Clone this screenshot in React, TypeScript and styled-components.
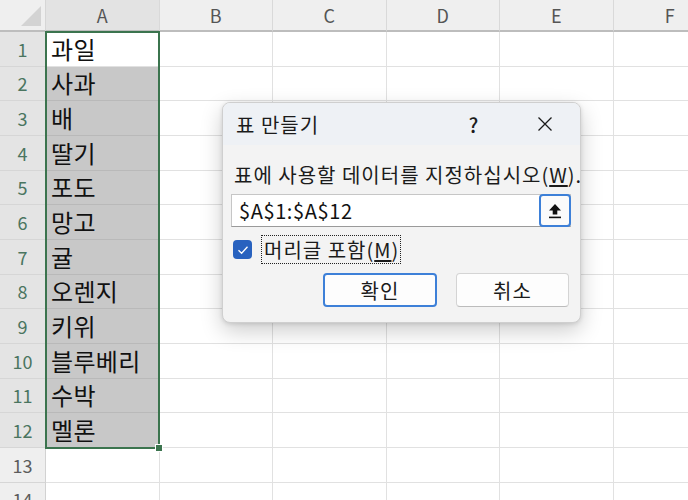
import React from 'react';
import styled, { createGlobalStyle } from 'styled-components';

const GlobalStyle = createGlobalStyle`
  html, body {
    margin: 0;
    padding: 0;
    background: #ffffff;
  }
  body {
    font-family: "Noto Sans CJK KR", "Noto Sans", sans-serif;
    color: #1a1a1a;
  }
`;

const COL_W = 113.5;
const ROW_H = 34.67;

const Page = styled.div`
  position: relative;
  width: 688px;
  height: 500px;
  overflow: hidden;
`;

const Sheet = styled.div`
  display: grid;
  grid-template-columns: 46px repeat(6, ${COL_W}px);
  grid-template-rows: 32px repeat(14, ${ROW_H}px);
  width: max-content;
`;

const Corner = styled.div`
  position: relative;
  grid-area: 1 / 1;
  background: #efefef;
  border-right: 1px solid #d6d6d6;
  border-bottom: 2px solid #bdbdbd;
  box-sizing: border-box;
`;

const CornerTriangle = styled.svg`
  position: absolute;
  right: 4px;
  bottom: 4px;
`;

const ColHeader = styled.div<{ $c: number; $selected?: boolean }>`
  grid-area: 1 / ${(p) => p.$c + 2};
  background: ${(p) => (p.$selected ? '#e3e3e3' : '#efefef')};
  border-right: 1px solid #d9d9d9;
  border-bottom: 2px solid #bdbdbd;
  box-sizing: border-box;
  display: flex;
  align-items: center;
  justify-content: center;
  font-size: 18px;
  color: #555555;
`;

const RowHeader = styled.div<{ $r: number; $selected?: boolean }>`
  grid-area: ${(p) => p.$r + 1} / 1;
  background: ${(p) => (p.$selected ? '#e4e4e4' : '#efefef')};
  border-right: 1px solid #d2d2d2;
  border-bottom: 1px solid #d6d6d6;
  box-sizing: border-box;
  display: flex;
  align-items: center;
  justify-content: center;
  font-size: 18px;
  color: ${(p) => (p.$selected ? '#4a7560' : '#5c5c5c')};
`;

const Cell = styled.div<{ $r: number; $c: number; $selected?: boolean }>`
  grid-area: ${(p) => p.$r + 1} / ${(p) => p.$c + 2};
  background: ${(p) => (p.$selected ? '#c8c8c8' : '#ffffff')};
  border-right: 1px solid ${(p) => (p.$selected ? '#b9b9b9' : '#e1e1e1')};
  border-bottom: 1px solid ${(p) => (p.$selected ? '#b9b9b9' : '#e1e1e1')};
  box-sizing: border-box;
  display: flex;
  align-items: center;
  padding-left: 5px;
  font-size: 24px;
  letter-spacing: 0.3px;
  color: #111111;
  line-height: 1;
`;

const SelectionFrame = styled.div`
  grid-area: 2 / 2 / 14 / 3;
  position: relative;
  margin: -1px 0 -1px -1px;
  border: 2px solid #3b744e;
  pointer-events: none;
  z-index: 2;
`;

const FillHandle = styled.div`
  position: absolute;
  right: -5px;
  bottom: -5px;
  width: 6px;
  height: 6px;
  background: #3b744e;
  border: 1px solid #ffffff;
`;

const Dialog = styled.div`
  position: absolute;
  left: 222px;
  top: 102px;
  width: 359px;
  height: 221px;
  box-sizing: border-box;
  border: 1px solid #cfcfcf;
  border-radius: 8px;
  background: #f3f3f3;
  box-shadow: 0 8px 22px rgba(0, 0, 0, 0.2), 0 1px 4px rgba(0, 0, 0, 0.12);
  overflow: hidden;
  display: flex;
  flex-direction: column;
  z-index: 5;
`;

const TitleBar = styled.div`
  height: 42px;
  background: #eef1f5;
  display: flex;
  align-items: center;
`;

const Title = styled.div`
  flex: 1;
  padding-left: 13px;
  font-size: 20px;
  letter-spacing: 1px;
  color: #1b1b1b;
`;

const TitleButton = styled.div`
  width: 71px;
  height: 42px;
  display: flex;
  align-items: center;
  justify-content: center;
  font-size: 20px;
  font-weight: 500;
  color: #1b1b1b;
`;

const Body = styled.div`
  flex: 1;
  padding: 18px 11px 0 8px;
  display: flex;
  flex-direction: column;
`;

const Label = styled.div`
  margin-left: 3px;
  font-size: 20px;
  letter-spacing: 1px;
  line-height: 24px;
  color: #1b1b1b;
  white-space: nowrap;
`;

const Key = styled.span`
  text-decoration: underline;
  text-underline-offset: 2px;
`;

const InputBox = styled.div`
  margin-top: 7px;
  width: 340px;
  height: 33px;
  box-sizing: border-box;
  background: #ffffff;
  border: 1px solid #c6c6c6;
  border-bottom-color: #9a9a9a;
  display: flex;
  align-items: center;
`;

const InputText = styled.div`
  flex: 1;
  padding-left: 7px;
  font-size: 20px;
  letter-spacing: 0.6px;
  color: #111111;
`;

const RefButton = styled.div`
  width: 32px;
  height: 33px;
  margin: -1px -1px -1px 0;
  box-sizing: border-box;
  border: 2px solid #3d80d8;
  border-radius: 4px;
  background: #fbfbfb;
  display: flex;
  align-items: center;
  justify-content: center;
`;

const CheckRow = styled.div`
  margin-top: 8px;
  display: flex;
  align-items: center;
  gap: 9px;
  padding-left: 2px;
`;

const CheckBox = styled.div`
  width: 19px;
  height: 19px;
  border-radius: 4px;
  background: #2862bf;
  display: flex;
  align-items: center;
  justify-content: center;
`;

const FocusLabel = styled.div`
  height: 29px;
  box-sizing: border-box;
  border: 1px dotted #222222;
  padding: 0 1px 0 2px;
  display: flex;
  align-items: center;
  font-size: 20px;
  letter-spacing: 1px;
  color: #1b1b1b;
`;

const ButtonRow = styled.div`
  margin-top: 9px;
  display: flex;
  justify-content: flex-end;
  gap: 19px;
`;

const Button = styled.div<{ $primary?: boolean }>`
  width: ${(p) => (p.$primary ? 114 : 113)}px;
  height: 34px;
  box-sizing: border-box;
  border-radius: 4px;
  background: #fdfdfd;
  border: ${(p) => (p.$primary ? '2px solid #3d80d8' : '1px solid #d4d4d4')};
  ${(p) => (p.$primary ? '' : 'border-bottom-color: #bcbcbc;')}
  display: flex;
  align-items: center;
  justify-content: center;
  font-size: 20px;
  letter-spacing: 1px;
  color: #1b1b1b;
`;

const columns = ['A', 'B', 'C', 'D', 'E', 'F'];
const fruits = [
  '과일',
  '사과',
  '배',
  '딸기',
  '포도',
  '망고',
  '귤',
  '오렌지',
  '키위',
  '블루베리',
  '수박',
  '멜론',
];

export default function App() {
  const rows = Array.from({ length: 14 }, (_, i) => i + 1);
  return (
    <Page>
      <GlobalStyle />
      <Sheet>
        <Corner>
          <CornerTriangle width="20" height="20" viewBox="0 0 20 20">
            <polygon points="20,0 20,20 0,20" fill="#d3d3d3" />
          </CornerTriangle>
        </Corner>
        {columns.map((c, ci) => (
          <ColHeader key={c} $c={ci} $selected={c === 'A'}>
            {c}
          </ColHeader>
        ))}
        {rows.map((r) => (
          <React.Fragment key={r}>
            <RowHeader $r={r} $selected={r <= 12}>
              {r}
            </RowHeader>
            {columns.map((c, ci) => (
              <Cell key={c} $r={r} $c={ci} $selected={ci === 0 && r >= 2 && r <= 12}>
                {ci === 0 && r <= 12 ? fruits[r - 1] : ''}
              </Cell>
            ))}
          </React.Fragment>
        ))}
        <SelectionFrame>
          <FillHandle />
        </SelectionFrame>
      </Sheet>

      <Dialog>
        <TitleBar>
          <Title>표 만들기</Title>
          <TitleButton>?</TitleButton>
          <TitleButton>
            <svg width="16" height="16" viewBox="0 0 16 16">
              <path d="M1.5 1.5 L14.5 14.5 M14.5 1.5 L1.5 14.5" stroke="#1b1b1b" strokeWidth="1.3" />
            </svg>
          </TitleButton>
        </TitleBar>
        <Body>
          <Label>
            표에 사용할 데이터를 지정하십시오(<Key>W</Key>).
          </Label>
          <InputBox>
            <InputText>$A$1:$A$12</InputText>
            <RefButton>
              <svg width="14" height="16" viewBox="0 0 14 16">
                <polygon points="7,1 13,7.5 9.3,7.5 9.3,11.5 4.7,11.5 4.7,7.5 1,7.5" fill="#111" />
                <rect x="1" y="13.6" width="12" height="1.6" fill="#111" />
              </svg>
            </RefButton>
          </InputBox>
          <CheckRow>
            <CheckBox>
              <svg width="12" height="10" viewBox="0 0 12 10">
                <path d="M1.5 5.2 L4.6 8.2 L10.5 1.8" fill="none" stroke="#ffffff" strokeWidth="1.3" />
              </svg>
            </CheckBox>
            <FocusLabel>
              머리글 포함(<Key>M</Key>)
            </FocusLabel>
          </CheckRow>
          <ButtonRow>
            <Button $primary>확인</Button>
            <Button>취소</Button>
          </ButtonRow>
        </Body>
      </Dialog>
    </Page>
  );
}
